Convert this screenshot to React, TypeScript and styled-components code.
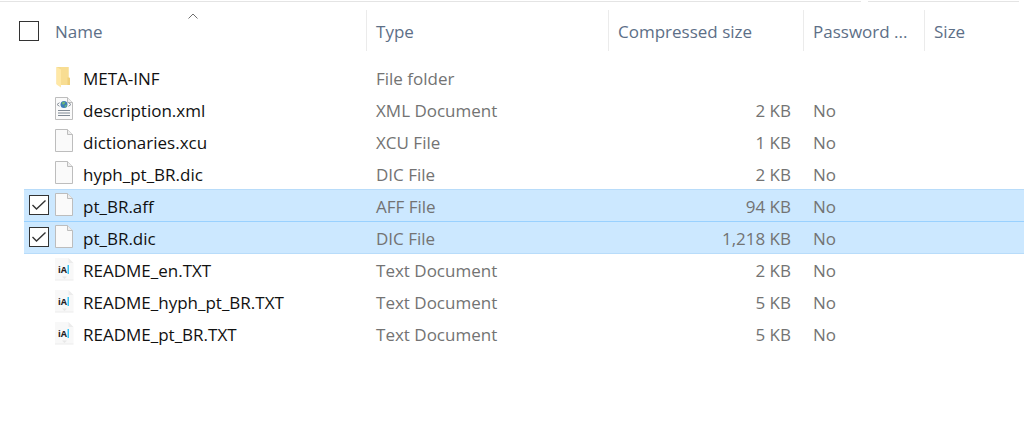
import React, { useState } from "react";
import styled, { createGlobalStyle } from "styled-components";

const GlobalStyle = createGlobalStyle`
  *, *::before, *::after { box-sizing: border-box; }
  body {
    margin: 0;
    background: #fff;
    color: #111;
    font-family: "Segoe UI", "Open Sans", "Noto Sans", sans-serif;
    font-size: 17px;
    line-height: 24px;
  }
`;

const Page = styled.main`
  min-height: 100vh;
  background: #fff;
`;

const BarEdges = styled.div`
  display: flex;
  gap: 7px;
  height: 2px;
  padding-right: 5px;
`;

const BarEdge = styled.div<{ $fixed?: boolean }>`
  flex: ${(p) => (p.$fixed ? "0 0 151px" : "1 1 auto")};
  border-bottom: 1px solid #e4e4e4;
`;

const FileTable = styled.table`
  width: 100%;
  table-layout: fixed;
  border-collapse: separate;
  border-spacing: 0;
`;

const Col = styled.col<{ $width?: number }>`
  width: ${(p) => (p.$width ? `${p.$width}px` : "auto")};
`;

const HeadCell = styled.th`
  height: 59px;
  padding: 8px 0 10px;
  vertical-align: top;
  text-align: left;
  font-weight: 400;
  color: #5d6f87;
  white-space: nowrap;
`;

const HeadLabel = styled.div`
  display: flex;
  align-items: center;
  height: 41px;
  padding: 3px 0 0 9px;
  border-left: 1px solid #ebebeb;
`;

const NameHead = styled.div`
  position: relative;
  display: flex;
  align-items: center;
  gap: 16px;
  height: 41px;
  margin-left: 19px;
`;

const NameLabel = styled.span`
  padding-top: 3px;
`;

const SortMark = styled.svg`
  position: absolute;
  top: 3px;
  left: 50%;
  margin-left: -5px;
`;

const Row = styled.tr<{ $edge: string; $fill: string }>`
  td:not(:first-child) {
    background: ${(p) => p.$fill};
    background-clip: padding-box;
    border-top: 1px solid ${(p) => p.$edge};
  }
  &:hover input { opacity: 1; }
`;

const PlainCell = styled.td`
  height: 32px;
  padding: 0;
`;

const CheckCell = styled(PlainCell)`
  padding: 0 0 2px 5px;
`;

const NameCell = styled(PlainCell)`
  color: #111;
  white-space: nowrap;
`;

const Cell = styled(PlainCell)<{ $right?: boolean }>`
  padding: ${(p) => (p.$right ? "3px 12px 0 0" : "3px 0 0 10px")};
  color: #737373;
  text-align: ${(p) => (p.$right ? "right" : "left")};
  white-space: nowrap;
`;

const NameLine = styled.div`
  display: flex;
  align-items: flex-start;
  gap: 8px;
`;

const IconSlot = styled.span`
  display: flex;
  width: 20px;
  height: 24px;
`;

const FileName = styled.label`
  padding-top: 2px;
`;

const CheckWrap = styled.span`
  position: relative;
  display: block;
  width: 20px;
  height: 20px;
`;

const CheckBox = styled.input<{ $quiet?: boolean }>`
  appearance: none;
  display: block;
  width: 20px;
  height: 20px;
  margin: 0;
  background: #fff;
  border: 1px solid #333;
  outline: 0;
  opacity: ${(p) => (p.$quiet ? 0 : 1)};
  &:focus-visible { opacity: 1; box-shadow: 0 0 0 2px #99d1ff; }
`;

const CheckMark = styled.svg`
  position: absolute;
  inset: 0;
  pointer-events: none;
`;

type Kind = "folder" | "xml" | "blank" | "text";

interface Entry {
  name: string;
  kind: Kind;
  type: string;
  size: string;
  locked: string;
}

const entries: Entry[] = [
  { name: "META-INF", kind: "folder", type: "File folder", size: "", locked: "" },
  { name: "description.xml", kind: "xml", type: "XML Document", size: "2 KB", locked: "No" },
  { name: "dictionaries.xcu", kind: "blank", type: "XCU File", size: "1 KB", locked: "No" },
  { name: "hyph_pt_BR.dic", kind: "blank", type: "DIC File", size: "2 KB", locked: "No" },
  { name: "pt_BR.aff", kind: "blank", type: "AFF File", size: "94 KB", locked: "No" },
  { name: "pt_BR.dic", kind: "blank", type: "DIC File", size: "1,218 KB", locked: "No" },
  { name: "README_en.TXT", kind: "text", type: "Text Document", size: "2 KB", locked: "No" },
  { name: "README_hyph_pt_BR.TXT", kind: "text", type: "Text Document", size: "5 KB", locked: "No" },
  { name: "README_pt_BR.TXT", kind: "text", type: "Text Document", size: "5 KB", locked: "No" },
];

function FileIcon({ kind }: { kind: Kind }) {
  if (kind === "folder") {
    return (
      <svg width="20" height="24" viewBox="0 0 20 24" aria-hidden="true">
        <path d="M1.500 2h12v17h-12z" fill="#f5db90" />
        <path d="M6 2h7.500v10l1.500 1v7H6z" fill="#f8dd92" />
        <path d="M12.500 12.500l2.500 .5v7h-2.500z" fill="#f0d07c" />
        <path d="M1.500 2l4.500 2.500V22.500l-4.500-3z" fill="#ffe8a6" />
      </svg>
    );
  }
  if (kind === "text") {
    return (
      <svg width="20" height="24" viewBox="0 0 20 24" aria-hidden="true">
        <path d="M0 1h13.500l5 5v17H0z" fill="#f8f8f8" />
        <path d="M13.500 1l5 5h-5z" fill="#ececec" />
        <path d="M0 23h18.500" stroke="#ececec" />
        <path d="M7 19.500h5l-2.500 2.500z" fill="#e6e6e6" />
        <text x="3" y="16" fontSize="9" fontWeight="700" fill="#222" fontFamily="Open Sans, sans-serif">iA</text>
        <path d="M12.500 8h1.500v9h-1.500z" fill="#35c3f3" />
      </svg>
    );
  }
  return (
    <svg width="20" height="24" viewBox="0 0 20 24" aria-hidden="true">
      <path d="M.5 .5h12l5 5v17H.5z" fill="#fafafa" stroke="#bdbdbd" />
      <path d="M12.500 .5v5h5" fill="#eee" stroke="#bdbdbd" />
      {kind === "xml" && (
        <>
          <circle cx="9" cy="7.500" r="3.500" fill="#3b7db8" />
          <path d="M6.800 5.700l2-1.300 1.500 1-1 1.800-1.500.5zM9.800 8.300l2-.8-.5 2.200-1.500.7z" fill="#6cb873" />
          <path d="M4.500 5.700L2 7.500l2.500 1.800M13.500 5.700L16 7.500l-2.500 1.800" fill="none" stroke="#8c959e" />
          <path d="M3 13.500h12M3 16h12M3 18.500h12" stroke="#7f8994" />
        </>
      )}
    </svg>
  );
}

interface TickProps {
  id?: string;
  label?: string;
  checked: boolean;
  quiet?: boolean;
  onToggle: () => void;
}

function Tick({ id, label, checked, quiet, onToggle }: TickProps) {
  return (
    <CheckWrap>
      <CheckBox
        id={id}
        type="checkbox"
        aria-label={label}
        checked={checked}
        $quiet={quiet}
        onChange={onToggle}
      />
      {checked && (
        <CheckMark width="20" height="20" viewBox="0 0 20 20" aria-hidden="true">
          <path d="M3.500 10l4 4 9-8.500" fill="none" stroke="#333" strokeWidth="1.400" />
        </CheckMark>
      )}
    </CheckWrap>
  );
}

export default function App() {
  const [selected, setSelected] = useState<string[]>(["pt_BR.aff", "pt_BR.dic"]);
  const all = selected.length === entries.length;
  const toggle = (name: string) =>
    setSelected((now) => (now.includes(name) ? now.filter((n) => n !== name) : [...now, name]));

  return (
    <Page>
      <GlobalStyle />
      <BarEdges>
        <BarEdge />
        <BarEdge $fixed />
      </BarEdges>
      <FileTable>
        <colgroup>
          <Col $width={24} />
          <Col $width={31} />
          <Col $width={311} />
          <Col $width={242} />
          <Col $width={195} />
          <Col $width={121} />
          <Col />
        </colgroup>
        <thead>
          <tr>
            <HeadCell colSpan={3} scope="col" aria-sort="ascending">
              <NameHead>
                <Tick
                  label="Select all"
                  checked={all}
                  onToggle={() => setSelected(all ? [] : entries.map((e) => e.name))}
                />
                <NameLabel>Name</NameLabel>
                <SortMark width="10" height="6" viewBox="0 0 10 6" aria-hidden="true">
                  <path d="M.5 5.500L5 1l4.500 4.500" fill="none" stroke="#707070" />
                </SortMark>
              </NameHead>
            </HeadCell>
            {["Type", "Compressed size", "Password ...", "Size"].map((title) => (
              <HeadCell key={title} scope="col">
                <HeadLabel>{title}</HeadLabel>
              </HeadCell>
            ))}
          </tr>
        </thead>
        <tbody>
          {entries.map((entry, index) => {
            const isOn = selected.includes(entry.name);
            const prevOn = index > 0 && selected.includes(entries[index - 1].name);
            const edge = isOn && prevOn ? "#99d1ff" : isOn || prevOn ? "#b8dcfa" : "transparent";
            const id = `pick-${entry.name}`;
            return (
              <Row key={entry.name} $fill={isOn ? "#cce8ff" : "transparent"} $edge={edge}>
                <PlainCell />
                <CheckCell>
                  <Tick id={id} checked={isOn} quiet={!isOn} onToggle={() => toggle(entry.name)} />
                </CheckCell>
                <NameCell>
                  <NameLine>
                    <IconSlot>
                      <FileIcon kind={entry.kind} />
                    </IconSlot>
                    <FileName htmlFor={id}>{entry.name}</FileName>
                  </NameLine>
                </NameCell>
                <Cell>{entry.type}</Cell>
                <Cell $right>{entry.size}</Cell>
                <Cell>{entry.locked}</Cell>
                <PlainCell />
              </Row>
            );
          })}
        </tbody>
      </FileTable>
    </Page>
  );
}
